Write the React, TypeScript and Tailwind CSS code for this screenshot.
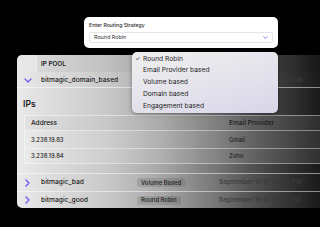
import React from "react";

const Down = () => (
  <svg width="8" height="5" viewBox="0 0 8 5" fill="none" className="block">
    <polyline points="1,1 4,4 7,1" stroke="#6b5cf6" strokeWidth="1.3" strokeLinecap="round" strokeLinejoin="round" />
  </svg>
);
const Right = () => (
  <svg width="5" height="8" viewBox="0 0 5 8" fill="none" className="block">
    <polyline points="1,1 4,4 1,7" stroke="#6b5cf6" strokeWidth="1.4" strokeLinecap="round" strokeLinejoin="round" />
  </svg>
);

const PoolRow = ({ name, badge, date, h }: { name: string; badge: string; date: string; h: string }) => (
  <div className={`flex items-center shrink-0 border-t border-white/50 leading-none ${h}`}>
    <div className="w-[20px] flex justify-center pl-[1px]"><Right /></div>
    <div className="w-[96px] pl-[4px] text-[6.7px] font-medium text-[#1c1c1c]">{name}</div>
    <div className="w-[82px] pl-[4px] flex items-center">
      <span className="flex items-center h-[9px] px-[4px] rounded-[2px] bg-black/10 text-[5.9px] font-medium text-[#1c1c1c]">{badge}</span>
    </div>
    <div className="pl-[4px] text-[6.5px] font-medium text-[#3a3a3a] whitespace-nowrap">{date}</div>
  </div>
);

export default function App() {
  const items = ["Round Robin", "Email Provider based", "Volume based", "Domain based", "Engagement based"];
  return (
    <div className="relative w-[320px] h-[227px] bg-black overflow-hidden leading-none" style={{ fontFamily: "Inter, 'Noto Sans', sans-serif" }}>
      <div className="pt-[55px] pl-[17px]">
        <div className="w-[330px] h-[153px] rounded-l-[5px] overflow-hidden bg-[linear-gradient(90deg,#e9e9e9_0%,#c9c9c9_27%,#a6a6a6_44%,#777777_60%,#555555_70%,#161616_93%,#101010_100%)] flex flex-col">
          {/* header */}
          <div className="flex items-stretch shrink-0 h-[17px] bg-black/[0.04]">
            <div className="w-[20px] bg-white/30 border-r border-white/40"></div>
            <div className="w-[96px] pl-[4px] pt-[2px] flex items-center text-[6.3px] font-semibold text-[#1a1a1a]">IP POOL</div>
          </div>
          {/* row 1 */}
          <div className="flex items-center shrink-0 h-[15px] pt-[2px]">
            <div className="w-[20px] flex justify-center pl-[1px]"><Down /></div>
            <div className="w-[96px] pl-[4px] text-[6.7px] font-medium text-[#1c1c1c]">bitmagic_domain_based</div>
            <div className="w-[82px] pl-[4px]"></div>
            <div className="pl-[4px] text-[6.5px] font-medium text-[#3a3a3a] whitespace-nowrap">September 10 @ 05:04 PM</div>
          </div>
          {/* expanded */}
          <div className="h-[86px] shrink-0 border-t border-white/50 pl-[6px] pt-[11px]">
            <div className="text-[8.6px] leading-[10px] font-semibold text-[#151515]">IPs</div>
            <div className="mt-[6px] ml-[1px] w-[300px] h-[49px] border border-white/40 bg-white/10 flex flex-col">
              <div className="flex items-center shrink-0 h-[14px] bg-black/[0.03] text-[6.6px] font-medium text-[#1a1a1a]">
                <div className="w-[204px] pl-[6px]">Address</div>
                <div>Email Provider</div>
              </div>
              <div className="flex items-center shrink-0 h-[18px] border-t border-white/40 text-[5.9px] font-medium text-[#1f1f1f]">
                <div className="w-[204px] pl-[6px]">3.238.19.83</div>
                <div>Gmail</div>
              </div>
              <div className="flex items-center flex-1 border-t border-white/40 text-[5.9px] font-medium text-[#1f1f1f]">
                <div className="w-[204px] pl-[6px]">3.238.19.84</div>
                <div>Zoho</div>
              </div>
            </div>
          </div>
          <PoolRow name="bitmagic_bad" badge="Volume Based" date="September 10 @ 05:06 PM" h="h-[18px]" />
          <PoolRow name="bitmagic_good" badge="Round Robin" date="September 10 @ 05:10 PM" h="flex-1" />
        </div>
      </div>

      {/* top strategy modal */}
      <div className="absolute left-[84px] top-[17px] w-[194px] h-[31px] bg-white rounded-[5px] px-[5px] pt-[5px]">
        <div className="text-[5.2px] leading-[6px] font-medium text-[#2a2a2a]">Enter Routing Strategy</div>
        <div className="mt-[4px] h-[11px] w-[184px] border border-[#e5e5e8] rounded-[2px] flex items-center justify-between pl-[4px] pr-[4px]">
          <span className="text-[5.4px] text-[#333]">Round Robin</span>
          <svg width="5" height="3" viewBox="0 0 5 3" fill="none" className="block">
            <polyline points="0.6,0.6 2.5,2.4 4.4,0.6" stroke="#7b6cf3" strokeWidth="0.9" strokeLinecap="round" strokeLinejoin="round" />
          </svg>
        </div>
      </div>

      {/* dropdown menu */}
      <div className="absolute left-[132px] top-[52px] w-[146px] h-[61px] rounded-[5px] bg-[linear-gradient(165deg,#efefef_0%,#e6e5ec_45%,#d9d5ea_100%)] shadow-[0_1px_4px_rgba(0,0,0,0.35)] pt-[1px]">
        {items.map((it, i) => (
          <div key={it} className="flex items-center h-[11.75px] text-[6.7px] text-[#1e1e1e]">
            <span className="w-[11px] pl-[3px] text-[6px]">{i === 0 ? "✓" : ""}</span>
            <span>{it}</span>
          </div>
        ))}
      </div>
    </div>
  );
}
